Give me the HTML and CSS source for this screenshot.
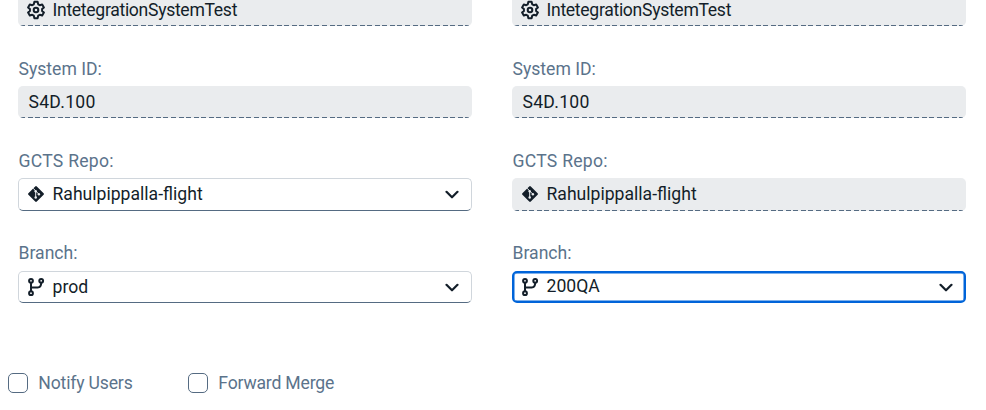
FILE: index.html
```html
<!DOCTYPE html>
<html lang="en">
<head>
<meta charset="utf-8">
<title>Deployment systems</title>
<link rel="stylesheet" href="styles.css">
</head>
<body>
<svg class="defs" width="0" height="0">
  <symbol id="gear" viewBox="0 0 18 20"><path d="M7.4 1.8h3.2l.6 2.5 1.6.9 2.4-.7 1.7 2.9L15.1 9v2l1.8 1.6-1.7 2.9-2.4-.7-1.6.9-.6 2.5H7.4l-.6-2.500-1.600-.9-2.400.7-1.700-2.900L2.900 11V9L1.100 7.400l1.700-2.900 2.400.7 1.600-.9z"/><circle cx="9" cy="10" r="2.3"/></symbol>
  <symbol id="git" viewBox="0 0 18 18"><path class="solid" d="M9 1a1 1 0 0 1 .8.4l6.800 6.800a1.100 1.100 0 0 1 0 1.600l-6.800 6.800a1.100 1.100 0 0 1-1.600 0L1.400 9.800a1.100 1.100 0 0 1 0-1.600l6.800-6.800a1 1 0 0 1 .8-.4z"/><path class="cut" d="M6.400 3.500 8.700 6v6.200M8.900 6.200l2.900 2.900"/><circle class="dot" cx="8.700" cy="6.200" r="1.200"/><circle class="dot" cx="8.700" cy="12.400" r="1.250"/><circle class="dot" cx="11.900" cy="9.200" r="1.200"/></symbol>
  <symbol id="branch" viewBox="0 0 18 20"><circle cx="4" cy="3.800" r="1.900"/><circle cx="14.200" cy="3.800" r="1.900"/><circle cx="4" cy="16.200" r="1.900"/><path d="M4 5.800v8.400M4 10.400h6.700Q14.200 10.400 14.200 5.800"/></symbol>
  <symbol id="chevron" viewBox="0 0 14 10"><path d="m1.500 1.800 5.500 5.500 5.500-5.500"/></symbol>
</svg>
<main class="page">
  <div class="columns">
    <section class="column">
      <div class="field">
        <div class="label"></div>
        <div class="input readonly"><svg class="icon"><use href="#gear"/></svg><span class="t-system">IntetegrationSystemTest</span></div>
      </div>
      <div class="field">
        <div class="label"><span class="t-id">System ID:</span></div>
        <div class="input readonly"><span class="t-sid">S4D.100</span></div>
      </div>
      <div class="field">
        <div class="label"><span class="t-gcts">GCTS Repo:</span></div>
        <div class="input select tall"><svg class="icon"><use href="#git"/></svg><span class="t-repo">Rahulpippalla-flight</span><svg class="chevron"><use href="#chevron"/></svg></div>
      </div>
      <div class="field last">
        <div class="label"><span class="t-branch">Branch:</span></div>
        <div class="input select"><svg class="icon"><use href="#branch"/></svg><span class="t-prod">prod</span><svg class="chevron"><use href="#chevron"/></svg></div>
      </div>
    </section>
    <section class="column">
      <div class="field">
        <div class="label"></div>
        <div class="input readonly"><svg class="icon"><use href="#gear"/></svg><span class="t-system">IntetegrationSystemTest</span></div>
      </div>
      <div class="field">
        <div class="label"><span class="t-id">System ID:</span></div>
        <div class="input readonly"><span class="t-sid">S4D.100</span></div>
      </div>
      <div class="field">
        <div class="label"><span class="t-gcts">GCTS Repo:</span></div>
        <div class="input readonly tall"><svg class="icon"><use href="#git"/></svg><span class="t-repo">Rahulpippalla-flight</span></div>
      </div>
      <div class="field last">
        <div class="label"><span class="t-branch">Branch:</span></div>
        <div class="input select focused"><svg class="icon"><use href="#branch"/></svg><span class="t-qa">200QA</span><svg class="chevron"><use href="#chevron"/></svg></div>
      </div>
    </section>
  </div>
  <div class="options">
    <div class="option"><i class="box"></i><span class="t-notify">Notify Users</span></div>
    <div class="option"><i class="box"></i><span class="t-merge">Forward Merge</span></div>
  </div>
</main>
</body>
</html>
```
FILE: styles.css
```css
* { box-sizing: border-box; }
body {
  margin: 0;
  background: #fff;
  color: #131e29;
  font: 17.6px/22px Roboto, "Liberation Sans", sans-serif;
}
.defs { display: block; }
.page { height: 410px; overflow: hidden; }
.columns {
  display: grid;
  grid-template-columns: 454px 454px;
  column-gap: 40px;
  padding-left: 18px;
  margin-top: -66px;
}
.column { display: grid; grid-template-rows: 92px 92px 93px 93px; }
.field { padding-top: 32px; display: flex; flex-direction: column; }
.last { padding-top: 31px; }
.label { height: 28px; padding-left: .5px; color: #5b738b; }
.last .label { height: 29px; }
.label span, .input span, .option span { white-space: nowrap; }
.input {
  display: flex;
  align-items: center;
  height: 32px;
  padding: 0 10px 0 10.5px;
  border-radius: 5px;
}
.input .icon {
  width: 18px;
  height: 20px;
  margin: 0 7.5px 0 -1.5px;
  flex: none;
}
.readonly {
  background: repeating-linear-gradient(to right, #556b82 0 5px, transparent 5px 7.55px) 2px 100% / calc(100% - 5px) 1px no-repeat, #eaecee;
}
.select { border: 1px solid #d0d6dc; border-bottom-color: #556b82; padding: 0 9px 0 9.5px; }
.tall { height: 33px; padding-bottom: 1px; }
.focused { border: 2px solid #0064d9; padding: 0 8px 0 8.5px; box-shadow: inset 0 0 0 .5px #0064d9; }
.focused .icon { margin-top: -1px; }
svg { fill: none; stroke: #131e29; stroke-width: 2; stroke-linecap: round; stroke-linejoin: round; }
.solid { fill: #131e29; stroke: none; }
.cut { stroke: #eaecee; stroke-width: 1; }
.dot { fill: #eaecee; stroke: none; }
.input .chevron { width: 14px; height: 10px; margin: 1px 3px 0 auto; stroke-width: 2.2; }
.t-system { letter-spacing: -.31px; }
.t-sid { letter-spacing: .25px; }
.t-gcts { letter-spacing: .26px; }
.t-qa { margin-bottom: 2px; }
.t-notify { letter-spacing: -.17px; }
.t-merge { letter-spacing: -.19px; }
.options { display: grid; grid-template-columns: 180px 180px; padding: 68px 0 0 8px; }
.option { display: flex; align-items: center; color: #5b738b; }
.box { width: 20px; height: 20px; margin-right: 10.3px; border: 1px solid #556b82; border-radius: 5px; }
```
